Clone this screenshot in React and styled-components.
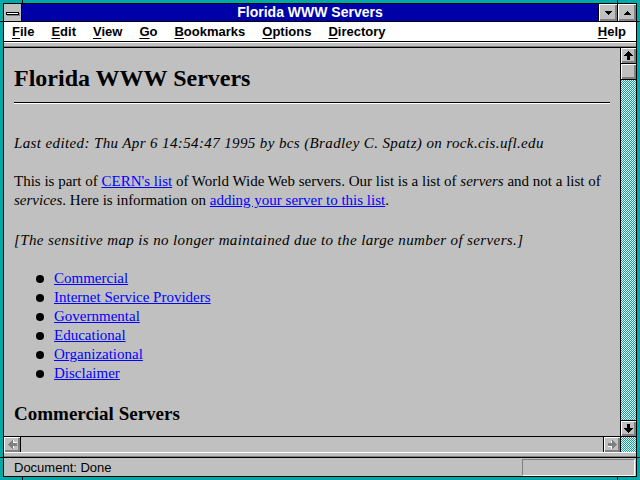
import React from "react";
import styled, { createGlobalStyle } from "styled-components";

const GlobalStyle = createGlobalStyle`
  html, body {
    margin: 0;
    padding: 0;
    overflow: hidden;
    background: #000;
  }
`;

const TEAL = "#00a8a8";
const FACE = "#c0c0c0";
const SHADOW = "#808080";

const Window = styled.div`
  position: relative;
  width: 640px;
  height: 480px;
  box-sizing: border-box;
  padding: 3px;
  background: ${TEAL};
`;

// little resize-handle ticks drawn across the teal frame
const Mark = styled.span`
  position: absolute;
  background: #000;
  ${(p) =>
    p.$vertical
      ? `width: 1px; height: 3px; left: ${p.$at}px; ${p.$side}: 0;`
      : `height: 1px; width: 3px; top: ${p.$at}px; ${p.$side}: 0;`}
`;

const Frame = styled.div`
  height: 100%;
  box-sizing: border-box;
  border: 1px solid #000;
  display: flex;
  flex-direction: column;
  background: ${FACE};
  font-family: "Liberation Sans", Arial, sans-serif;
`;

const TitleBar = styled.div`
  flex-shrink: 0;
  display: flex;
  height: 17px;
  border-bottom: 1px solid #000;
  background: #0000a8;
`;

const SysBox = styled.div`
  width: 18px;
  border-right: 1px solid #000;
  background: ${FACE};
  display: flex;
  align-items: center;
  justify-content: center;
  padding-top: 1px;
  box-sizing: border-box;
`;

const SysGlyph = styled.div`
  width: 11px;
  height: 1px;
  border: 1px solid #000;
  background: #fff;
  box-shadow: 1px 1px 0 ${SHADOW};
  margin-right: 1px;
`;

const Title = styled.div`
  flex: 1;
  color: #fff;
  font-weight: bold;
  font-size: 14px;
  line-height: 17px;
  text-align: center;
`;

const CapButton = styled.div`
  width: 18px;
  border-left: 1px solid #000;
  background: ${FACE};
  box-shadow: inset 1px 1px 0 #fff, inset -1px -1px 0 ${SHADOW},
    inset -2px -2px 0 ${SHADOW};
  display: flex;
  align-items: center;
  justify-content: center;
`;

const MenuBar = styled.div`
  flex-shrink: 0;
  display: flex;
  align-items: center;
  gap: 17px;
  height: 19px;
  padding: 0 10px 0 8px;
  border-bottom: 1px solid #000;
  background: #fff;
  font-weight: bold;
  font-size: 13px;
  color: #000;
`;

const MenuItem = styled.span`
  margin-left: ${(p) => (p.$right ? "auto" : "0")};
  u {
    text-underline-offset: 2px;
  }
`;

const Strip = styled.div`
  flex-shrink: 0;
  height: 5px;
  border-bottom: 1px solid #000;
  background: ${FACE};
  box-shadow: inset 0 1px 0 #fff, inset 0 -1px 0 ${SHADOW};
`;

const Main = styled.div`
  flex: 1;
  display: flex;
  min-height: 0;
`;

const ContentCol = styled.div`
  flex: 1;
  min-width: 0;
  display: flex;
  flex-direction: column;
`;

const Viewport = styled.div`
  flex: 1;
  overflow: hidden;
  padding: 0 2px 0 10px;
  background: ${FACE};
  color: #000;
  font-family: "Liberation Serif", "Times New Roman", serif;
  font-size: 15px;
  line-height: 19px;

  a {
    color: #0000ff;
    text-decoration: underline;
  }
`;

const H1 = styled.h1`
  margin: 16px 0 0;
  font-size: 24px;
  line-height: 28px;
  font-weight: bold;
`;

const Rule = styled.div`
  margin: 10px 8px 0 0;
  height: 0;
  border-top: 1px solid #000;
  border-bottom: 1px solid #fff;
`;

const Para = styled.p`
  margin: ${(p) => p.$top}px 0 0;
  font-style: ${(p) => (p.$italic ? "italic" : "normal")};
  letter-spacing: ${(p) => (p.$italic ? "0.38px" : "0")};
  white-space: nowrap;
`;

const List = styled.ul`
  margin: 19px 0 0;
  padding: 0 0 0 40px;
  list-style: none;
`;

const Item = styled.li`
  position: relative;
  &::before {
    content: "";
    position: absolute;
    left: -18px;
    top: 6px;
    width: 8px;
    height: 8px;
    border-radius: 50%;
    background: #000;
  }
`;

const H2 = styled.h2`
  margin: 20px 0 0;
  font-size: 19px;
  line-height: 22px;
  font-weight: bold;
`;

const HScroll = styled.div`
  flex-shrink: 0;
  height: 15px;
  border-top: 1px solid #000;
  display: flex;
  background: ${FACE};
`;

const Track = styled.div`
  flex: 1;
  background: ${FACE};
`;

const dither = `
  background-color: ${TEAL};
  background-image: conic-gradient(#fff 25%, ${TEAL} 0 50%, #fff 0 75%, ${TEAL} 0);
  background-size: 2px 2px;
`;

const VScroll = styled.div`
  flex-shrink: 0;
  width: 15px;
  border-left: 1px solid #000;
  display: flex;
  flex-direction: column;
`;

const VTrack = styled.div`
  flex: 1;
  ${dither}
`;

const Corner = styled.div`
  height: 15px;
  border-top: 1px solid #000;
  ${dither}
`;

const ArrowButton = styled.div`
  flex-shrink: 0;
  width: ${(p) => (p.$horizontal ? "16px" : "15px")};
  height: 15px;
  background: ${FACE};
  box-shadow: inset 1px 1px 0 #fff, inset -1px -1px 0 ${SHADOW},
    inset -2px -2px 0 ${SHADOW};
  display: flex;
  align-items: center;
  justify-content: center;
  ${(p) => p.$edge && `border-${p.$edge}: 1px solid #000;`}
`;

const Separator = styled.div`
  flex-shrink: 0;
  height: 5px;
  border-bottom: 1px solid #000;
  background: ${FACE};
  box-shadow: inset 0 1px 0 #fff, inset 0 -1px 0 ${SHADOW};
`;

const StatusBar = styled.div`
  flex-shrink: 0;
  height: 18px;
  display: flex;
  align-items: center;
  justify-content: space-between;
  padding: 0 1px 0 10px;
  font-size: 13px;
  color: #000;
`;

const StatusBox = styled.div`
  width: 111px;
  height: 15px;
  border: 1px solid;
  border-color: ${SHADOW} #fff #fff ${SHADOW};
`;

function Triangle({ down }) {
  return (
    <svg width="7" height="4" viewBox="0 0 7 4" shapeRendering="crispEdges">
      <polygon
        points={down ? "0,0 7,0 3.5,4" : "3.5,0 7,4 0,4"}
        fill="#000"
      />
    </svg>
  );
}

// chunky win3.1 style arrow; dir = up | down | left | right
function Arrow({ dir, disabled }) {
  const up = "4.5,0 9,5 6,5 6,9 3,9 3,5 0,5";
  const rot = { up: 0, right: 90, down: 180, left: 270 }[dir];
  const fill = disabled ? SHADOW : "#000";
  return (
    <svg width="9" height="9" viewBox="0 0 9 9" shapeRendering="crispEdges">
      <g transform={`rotate(${rot} 4.5 4.5)`}>
        {disabled && (
          <polygon points={up} fill="#fff" transform="translate(1 1)" />
        )}
        <polygon points={up} fill={fill} />
      </g>
    </svg>
  );
}

const menus = ["File", "Edit", "View", "Go", "Bookmarks", "Options", "Directory"];
const links = [
  "Commercial",
  "Internet Service Providers",
  "Governmental",
  "Educational",
  "Organizational",
  "Disclaimer",
];

export default function App() {
  return (
    <>
      <GlobalStyle />
      <Window>
        <Mark $vertical $at={22} $side="top" />
        <Mark $vertical $at={617} $side="top" />
        <Mark $vertical $at={22} $side="bottom" />
        <Mark $vertical $at={617} $side="bottom" />
        <Mark $at={21} $side="left" />
        <Mark $at={457} $side="left" />
        <Mark $at={21} $side="right" />
        <Mark $at={457} $side="right" />

        <Frame>
          <TitleBar>
            <SysBox>
              <SysGlyph />
            </SysBox>
            <Title>Florida WWW Servers</Title>
            <CapButton>
              <Triangle down />
            </CapButton>
            <CapButton>
              <Triangle />
            </CapButton>
          </TitleBar>

          <MenuBar>
            {menus.map((m) => (
              <MenuItem key={m}>
                <u>{m[0]}</u>
                {m.slice(1)}
              </MenuItem>
            ))}
            <MenuItem $right>
              <u>H</u>elp
            </MenuItem>
          </MenuBar>

          <Strip />

          <Main>
            <ContentCol>
              <Viewport>
                <H1>Florida WWW Servers</H1>
                <Rule />
                <Para $top={30} $italic>
                  Last edited: Thu Apr 6 14:54:47 1995 by bcs (Bradley C.
                  Spatz) on rock.cis.ufl.edu
                </Para>
                <Para $top={19}>
                  This is part of <a href="#cern">CERN's list</a> of World Wide
                  Web servers. Our list is a list of <i>servers</i> and not a
                  list of
                  <br />
                  <i>services</i>. Here is information on{" "}
                  <a href="#adding">adding your server to this list</a>.
                </Para>
                <Para $top={21} $italic>
                  [The sensitive map is no longer maintained due to the large
                  number of servers.]
                </Para>
                <List>
                  {links.map((l) => (
                    <Item key={l}>
                      <a href={`#${l}`}>{l}</a>
                    </Item>
                  ))}
                </List>
                <H2>Commercial Servers</H2>
              </Viewport>
              <HScroll>
                <ArrowButton $horizontal $edge="right">
                  <Arrow dir="left" disabled />
                </ArrowButton>
                <Track />
                <ArrowButton $horizontal $edge="left">
                  <Arrow dir="right" disabled />
                </ArrowButton>
              </HScroll>
            </ContentCol>
            <VScroll>
              <ArrowButton $edge="bottom">
                <Arrow dir="up" />
              </ArrowButton>
              <ArrowButton $edge="bottom" />
              <VTrack />
              <ArrowButton $edge="top">
                <Arrow dir="down" />
              </ArrowButton>
              <Corner />
            </VScroll>
          </Main>

          <Separator />
          <StatusBar>
            <span>Document: Done</span>
            <StatusBox />
          </StatusBar>
        </Frame>
      </Window>
    </>
  );
}
